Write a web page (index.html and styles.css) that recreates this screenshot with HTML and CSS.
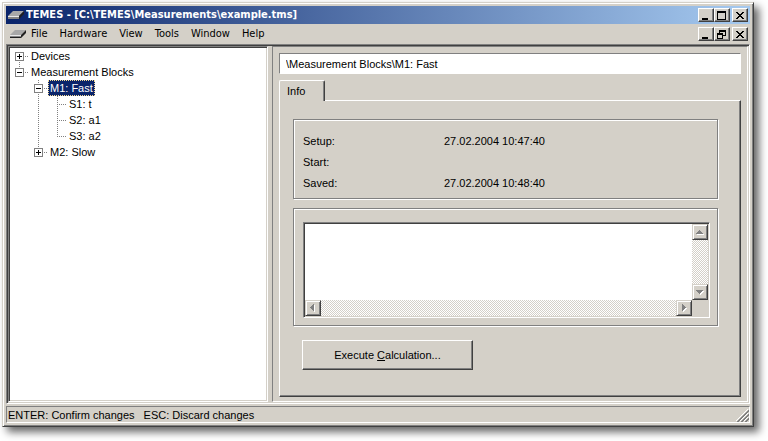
FILE: index.html
```html
<!DOCTYPE html>
<html lang="en">
<head>
  <meta charset="utf-8" />
  <meta name="viewport" content="width=device-width,initial-scale=1" />
  <title>TEMES - [C:\TEMES\Measurements\example.tms]</title>
  <link rel="stylesheet" href="styles.css">
</head>
<body>
  <div class="window">
    <!-- Title bar -->
    <header class="titlebar">
      <svg class="app-icon" width="16" height="8" viewBox="0 0 16 8" aria-hidden="true">
        <path d="M0 5 5 0h11l-5 5z" fill="#a8a8a8"/>
        <path d="M0 5h11v3H0z" fill="#848484"/>
        <path d="M11 5l5-5v3l-5 5z" fill="#202020"/>
        <path d="M0 5.500h11" stroke="#e8e8e8"/>
      </svg>
      <h1>TEMES - [C:\TEMES\Measurements\example.tms]</h1>
      <div class="controls">
        <button type="button" aria-label="Minimize"><svg width="12" height="10" viewBox="0 0 12 10"><path d="M2 7h6v2H2z"/></svg></button>
        <button type="button" aria-label="Maximize"><svg width="12" height="10" viewBox="0 0 12 10"><path fill-rule="evenodd" d="M1 0h9v9H1zM2 2v6h7V2z"/></svg></button>
        <button type="button" aria-label="Close" class="close"><svg width="12" height="10" viewBox="0 0 12 10"><path d="M2 1h2v1h1v1h2V2h1V1h2v1H9v1H8v1H7v1h1v1h1v1h1v1H8V7H7V6H5v1H4v1H2V7h1V6h1V5h1V4H4V3H3V2H2z"/></svg></button>
      </div>
    </header>

    <!-- Menu bar -->
    <div class="menubar">
      <svg class="app-icon" width="16" height="8" viewBox="0 0 16 8" aria-hidden="true">
        <path d="M0 5 5 0h11l-5 5z" fill="#a8a8a8"/>
        <path d="M0 5h11v3H0z" fill="#848484"/>
        <path d="M11 5l5-5v3l-5 5zM0 7h11v1H0z" fill="#202020"/>
        <path d="M0 5.500h11" stroke="#e8e8e8"/>
      </svg>
      <nav class="menu">
        <button type="button">File</button>
        <button type="button">Hardware</button>
        <button type="button">View</button>
        <button type="button">Tools</button>
        <button type="button">Window</button>
        <button type="button">Help</button>
      </nav>
      <div class="controls">
        <button type="button" aria-label="Minimize document"><svg width="12" height="10" viewBox="0 0 12 10"><path d="M2 7h6v2H2z"/></svg></button>
        <button type="button" aria-label="Restore document"><svg width="12" height="10" viewBox="0 0 12 10"><path fill-rule="evenodd" d="M3 0h7v6H7v3H1V3h2zM4 2v1h3v2h2V2zM2 5v3h4V5z"/></svg></button>
        <button type="button" aria-label="Close document" class="close"><svg width="12" height="10" viewBox="0 0 12 10"><path d="M2 1h2v1h1v1h2V2h1V1h2v1H9v1H8v1H7v1h1v1h1v1h1v1H8V7H7V6H5v1H4v1H2V7h1V6h1V5h1V4H4V3H3V2H2z"/></svg></button>
      </div>
    </div>

    <main class="client">
      <!-- Tree -->
      <aside class="tree-pane">
        <ul class="tree">
          <li>
            <div class="row"><button type="button" class="toggle plus" aria-label="Expand Devices"></button><span class="label">Devices</span></div>
          </li>
          <li>
            <div class="row"><button type="button" class="toggle" aria-label="Collapse Measurement Blocks"></button><span class="label">Measurement Blocks</span></div>
            <ul>
              <li>
                <div class="row"><button type="button" class="toggle" aria-label="Collapse M1"></button><span class="label selected">M1: Fast</span></div>
                <ul>
                  <li><div class="row leaf"><span class="label">S1: t</span></div></li>
                  <li><div class="row leaf"><span class="label">S2: a1</span></div></li>
                  <li><div class="row leaf"><span class="label">S3: a2</span></div></li>
                </ul>
              </li>
              <li>
                <div class="row"><button type="button" class="toggle plus" aria-label="Expand M2"></button><span class="label">M2: Slow</span></div>
              </li>
            </ul>
          </li>
        </ul>
      </aside>

      <!-- Details -->
      <section class="detail">
        <input class="path" type="text" aria-label="Path" value="\Measurement Blocks\M1: Fast" readonly>
        <div class="tabs" role="tablist">
          <button type="button" class="tab" role="tab" aria-selected="true">Info</button>
        </div>
        <div class="panel" role="tabpanel">
          <div class="group info-group">
            <dl class="info">
              <dt>Setup:</dt><dd>27.02.2004 10:47:40</dd>
              <dt>Start:</dt><dd></dd>
              <dt>Saved:</dt><dd>27.02.2004 10:48:40</dd>
            </dl>
          </div>
          <div class="group memo-group">
            <div class="memo">
              <textarea aria-label="Comment"></textarea>
              <div class="scroll vertical">
                <button type="button" aria-label="Scroll up" disabled><svg width="8" height="6" viewBox="0 0 8 6"><path fill="#fff" d="M1 5h7v1H1z"/><path fill="#808080" d="M3 1h1v1h1v1h1v1h1v1H0V4h1V3h1V2h1z"/></svg></button>
                <button type="button" aria-label="Scroll down" disabled><svg width="8" height="6" viewBox="0 0 8 6"><path fill="#fff" d="M8 2v1H7v1H6v1H5v1H4V2z"/><path fill="#808080" d="M0 1h7v1H6v1H5v1H4v1H3V4H2V3H1V2H0z"/></svg></button>
              </div>
              <div class="scroll horizontal">
                <button type="button" aria-label="Scroll left" disabled><svg width="6" height="8" viewBox="0 0 6 8"><path fill="#fff" d="M5 1v7H4V1z"/><path fill="#808080" d="M4 0v7H3V6H2V5H1V4H0V3h1V2h1V1h1V0z"/></svg></button>
                <button type="button" aria-label="Scroll right" disabled><svg width="6" height="8" viewBox="0 0 6 8"><path fill="#fff" d="M2 8V4h4v1H5v1H4v1H3v1z"/><path fill="#808080" d="M1 0h1v1h1v1h1v1h1v1H4v1H3v1H2v1H1z"/></svg></button>
              </div>
            </div>
          </div>
          <button type="button" class="execute">Execute <u>C</u>alculation...</button>
        </div>
      </section>
    </main>

    <!-- Status bar -->
    <footer class="status">
      <span>ENTER: Confirm changes</span>
      <span>ESC: Discard changes</span>
      <svg class="grip" width="13" height="13" viewBox="0 0 13 13" aria-hidden="true">
        <path d="M0 12 12 0M4 12l8-8M8 12l4-4" stroke="#fff" fill="none"/>
        <path d="M1 13 13 1M2 13 13 2M5 13l8-8M6 13l7-7M9 13l4-4M10 13l3-3" stroke="#808080" fill="none"/>
      </svg>
    </footer>
  </div>
</body>
</html>
```

FILE: styles.css
```css
/* === Reset === */
*,*::before,*::after{box-sizing:border-box;margin:0;padding:0;}
ul{list-style:none;}

/* === Tokens & base === */
:root{
  --face:#d4d0c8;
  --light:#fff;
  --shade:#808080;
  --dark:#404040;
  --navy:#0a246a;
  --sky:#a6caf0;
  --ui:"Liberation Sans",Arial,sans-serif;
  --caption:"DejaVu Sans Condensed","DejaVu Sans",Tahoma,sans-serif;
}

body{
  display:flex;
  min-height:100vh;
  padding:2px 14px 14px 2px;
  background:#fff;
  color:#000;
  font:11px/16px var(--ui);
}
button,input,textarea{font:inherit;color:inherit;border:0;border-radius:0;background:var(--face);}
button svg{display:block;}
svg{flex:none;}

/* === Window frame === */
.window{
  flex:1;
  min-width:0;
  display:flex;
  flex-direction:column;
  padding:3px;
  border:1px solid;
  border-color:var(--face) var(--dark) var(--dark) var(--face);
  background:var(--face);
  box-shadow:inset 1px 1px var(--light),inset -1px -1px var(--shade),5px 5px 8px rgb(0 0 0/.6);
}
.titlebar,.menubar{display:flex;align-items:center;padding-right:2px;}
.titlebar{
  height:18px;
  padding-left:2px;
  gap:2px;
  background:linear-gradient(90deg,var(--navy),var(--sky));
  color:#fff;
}
.titlebar h1{flex:1;font:bold 11px/16px var(--caption);white-space:nowrap;overflow:hidden;}
.menubar{height:20px;padding-left:4px;}
.menu{flex:1;display:flex;}
.menu button{padding:0 7px 0 5px;font:11px/16px var(--caption);}

.controls{display:flex;}
.controls button{
  width:16px;height:14px;
  padding:2px 1px;
  border:1px solid;
  border-color:var(--light) var(--dark) var(--dark) var(--light);
  box-shadow:inset -1px -1px var(--shade);
}
.controls .close{margin-left:2px;}

/* === Client area === */
.client{
  flex:1;
  display:flex;
  gap:4px;
  padding:1px;
  border:1px solid;
  border-color:var(--shade) var(--light) var(--light) var(--shade);
  box-shadow:inset 1px 1px var(--dark);
}
.tree-pane{
  flex:0 0 260px;
  padding:1px 1px 1px 6px;
  border:1px solid;
  border-color:var(--shade) var(--light) var(--light) var(--shade);
  background:#fff;
  box-shadow:inset 1px 1px var(--dark),inset -1px -1px var(--face);
}

/* dotted connectors are drawn as backgrounds behind the boxes */
.tree li{
  background:repeating-linear-gradient(var(--shade) 0 1px,transparent 1px 2px) 4px 0/1px 100% no-repeat;
}
.tree li:last-child{background-size:1px 8px;}
.tree > li:first-child{background-position:4px 8px;}
.tree ul{margin-left:19px;}
.row{
  display:flex;
  align-items:center;
  height:16px;
  background:repeating-linear-gradient(90deg,var(--shade) 0 1px,transparent 1px 2px) 4px 8px/9px 1px no-repeat;
}
.toggle{
  flex:none;
  width:9px;height:9px;
  margin-right:5px;
  border:1px solid var(--shade);
  background:linear-gradient(#000,#000) center/5px 1px no-repeat,#fff;
}
.toggle.plus{
  background:linear-gradient(#000,#000) center/5px 1px no-repeat,linear-gradient(#000,#000) center/1px 5px no-repeat,#fff;
}
.label{padding:0 2px;white-space:nowrap;}
.leaf .label{margin-left:14px;}
.selected{background:var(--navy);color:#fff;outline:1px dotted #f5db95;outline-offset:-1px;}

/* === Detail pane === */
.detail{
  flex:1;
  min-width:0;
  display:flex;
  flex-direction:column;
  padding:6px 6px 4px;
  border:1px solid;
  border-color:var(--shade) var(--light) var(--light) var(--shade);
}
.path{
  width:100%;
  height:21px;
  padding:0 6px;
  border:1px solid;
  border-color:var(--shade) var(--light) var(--light) var(--shade);
  background:#fff;
}
.tabs{display:flex;margin-top:6px;}
.tab{
  position:relative;
  height:21px;
  width:46px;
  margin-bottom:-1px;
  padding:0 7px;
  text-align:left;
  border:1px solid;
  border-color:var(--light) var(--dark) transparent var(--light);
  border-bottom:0;
  border-radius:2px 2px 0 0;
  box-shadow:inset -1px 0 var(--shade);
}
.panel{
  flex:1;
  padding:18px 22px 24px 13px;
  border:1px solid;
  border-color:var(--light) var(--dark) var(--dark) var(--light);
  box-shadow:inset -1px -1px var(--shade);
}
.group{
  border:1px solid var(--shade);
  box-shadow:inset 1px 1px var(--light),1px 1px var(--light);
}
.info-group{padding:10px 9px 5px;}
.info{
  display:grid;
  grid-template-columns:141px 1fr;
  grid-auto-rows:21px;
  align-items:center;
}
.memo-group{margin-top:9px;padding:13px 7px 7px 9px;}
.memo{
  display:grid;
  grid-template-columns:1fr 16px;
  grid-template-rows:76px 16px;
  padding:1px;
  border:1px solid;
  border-color:var(--shade) var(--light) var(--light) var(--shade);
  box-shadow:inset 1px 1px var(--dark);
}
.memo textarea{width:100%;height:100%;background:#fff;resize:none;overflow:hidden;outline:0;}
.scroll{
  display:flex;
  justify-content:space-between;
  background:repeating-conic-gradient(var(--face) 0 25%,#fff 0 50%) 0 0/2px 2px;
}
.vertical{flex-direction:column;}
.scroll button{
  width:16px;height:16px;
  display:grid;
  place-items:center;
  border:1px solid;
  border-color:var(--face) var(--dark) var(--dark) var(--face);
  box-shadow:inset 1px 1px var(--light),inset -1px -1px var(--shade);
}
.execute{
  width:171px;height:30px;
  margin:14px 0 0 9px;
  border:1px solid;
  border-color:var(--light) var(--dark) var(--dark) var(--light);
  box-shadow:inset -1px -1px var(--shade);
}

/* === Status bar === */
.status{
  display:flex;
  align-items:center;
  gap:9px;
  height:17px;
  margin-top:2px;
  padding-left:1px;
  border:1px solid;
  border-color:var(--shade) var(--light) var(--light) var(--shade);
}
.grip{margin-left:auto;align-self:flex-end;}
```
